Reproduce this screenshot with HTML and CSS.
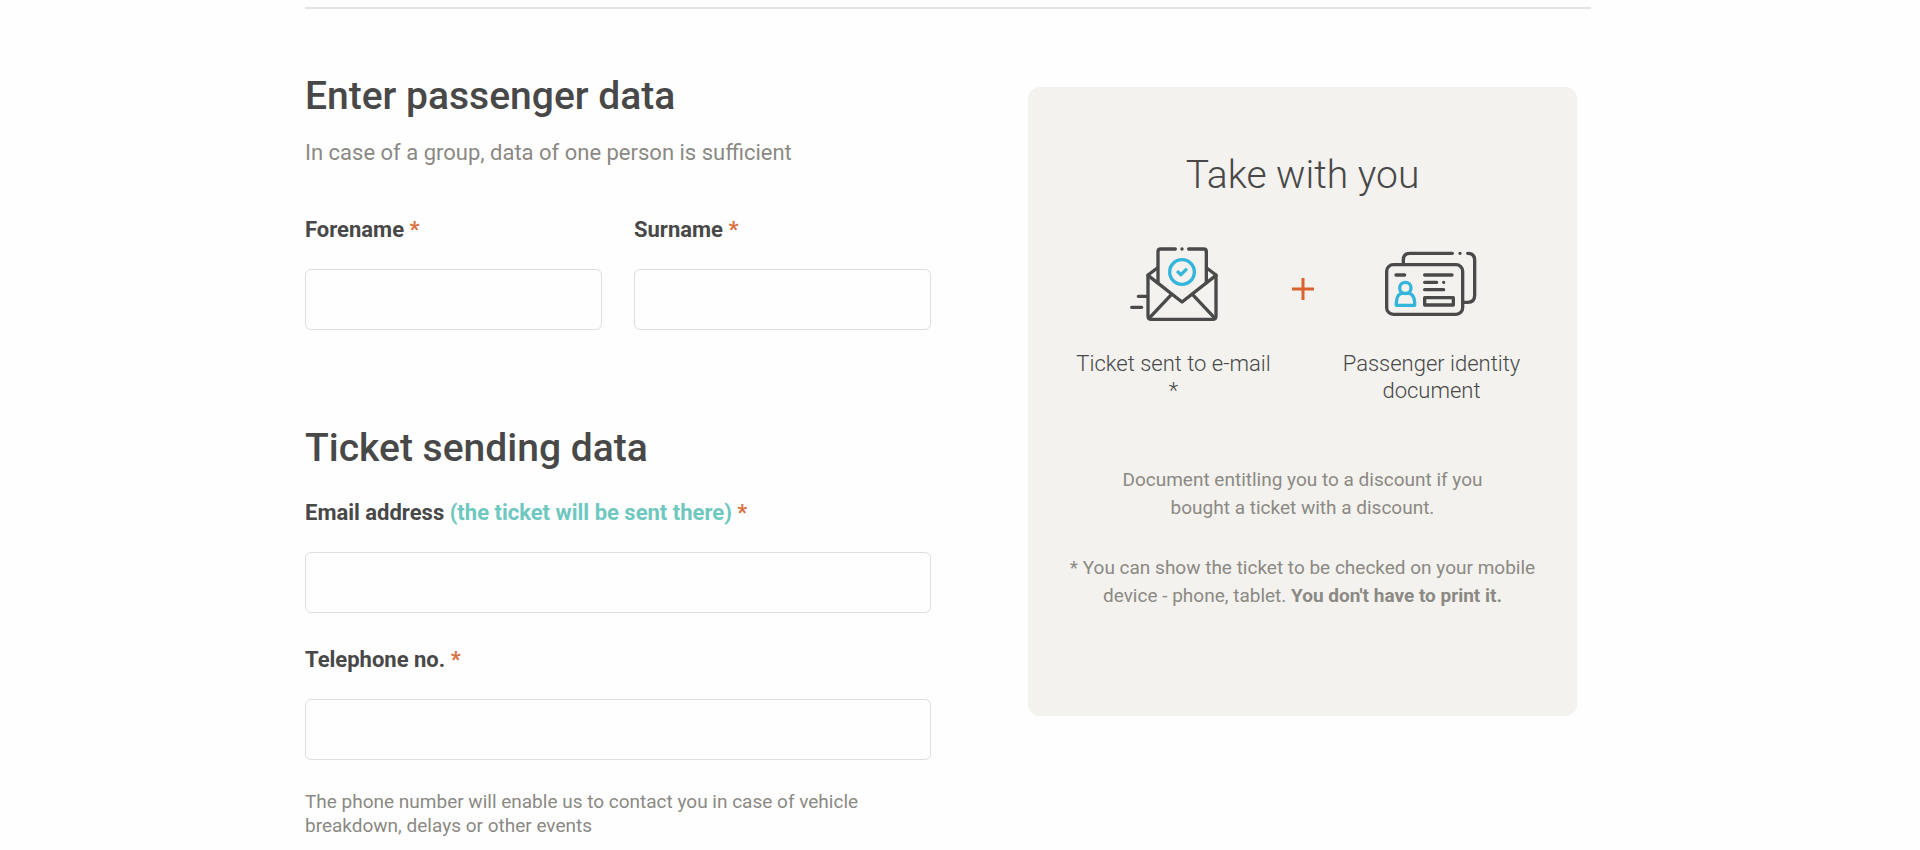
FILE: index.html
```html
<!DOCTYPE html>
<html lang="en">
<head>
  <meta charset="UTF-8" />
  <meta name="viewport" content="width=device-width, initial-scale=1.0"/>
  <title>Passenger data</title>
  <link rel="stylesheet" href="styles.css">
</head>
<body>

  <main class="container">

    <!-- Passenger form -->
    <form class="passenger-form">
      <section class="form-section">
        <h2>Enter passenger data</h2>
        <p class="subtitle">In case of a group, data of one person is sufficient</p>
        <div class="field-row">
          <div class="field">
            <label for="forename">Forename <span class="required">*</span></label>
            <input type="text" id="forename" name="forename" required>
          </div>
          <div class="field">
            <label for="surname">Surname <span class="required">*</span></label>
            <input type="text" id="surname" name="surname" required>
          </div>
        </div>
      </section>

      <section class="form-section">
        <h2>Ticket sending data</h2>
        <div class="field-list">
          <div class="field">
            <label for="email">Email address <span class="note">(the ticket will be sent there)</span> <span class="required">*</span></label>
            <input type="email" id="email" name="email" required>
          </div>
          <div class="field">
            <label for="phone">Telephone no. <span class="required">*</span></label>
            <input type="tel" id="phone" name="phone" aria-describedby="phone-hint" required>
          </div>
        </div>
        <p class="hint" id="phone-hint">The phone number will enable us to contact you in case of vehicle breakdown, delays or other events</p>
      </section>
    </form>

    <!-- Info card -->
    <aside class="card">
      <h2 class="card-title">Take with you</h2>

      <div class="items">
        <div class="item">
          <svg class="icon" viewBox="42 42 300 240" aria-hidden="true">
            <g class="dark">
              <path d="M144 158V65q0-8 8-8h44M236 57h45q8 0 8 8v93"/>
              <path d="M216 57h.1"/>
              <path d="M142 114L114 135V258q0 10 10 10H308q10 0 10-10V135L290 114"/>
              <path d="M114 136L216 216L318 136"/>
              <path d="M117 265L184 194M315 265L248 194"/>
              <path d="M85 199H112M65 232H95"/>
            </g>
            <g class="blue">
              <circle cx="216" cy="126" r="37"/>
              <path d="M204 126l9 8 15-15"/>
            </g>
          </svg>
          <p class="caption">Ticket sent to e-mail *</p>
        </div>

        <svg class="plus" viewBox="0 0 22 22" aria-hidden="true">
          <path d="M11 0V22M0 11H22"/>
        </svg>

        <div class="item">
          <svg class="icon" viewBox="336 42 300 240" aria-hidden="true">
            <g class="dark">
              <path d="M400 102V90q0-20 20-20H547M593 70q21 0 21 21V196q0 21-21 21H582"/>
              <path d="M570 70h.1M521 157h.1"/>
              <rect x="350" y="104" width="228" height="149" rx="20"/>
              <path d="M378 135H404M464 135H546M464 157H500M464 179H521"/>
              <rect x="464" y="203" width="86" height="22"/>
            </g>
            <g class="blue">
              <circle cx="406" cy="174" r="17"/>
              <path d="M379 226V217Q381 193 394 190H418Q432 193 434 217V226Z"/>
            </g>
          </svg>
          <p class="caption">Passenger identity document</p>
        </div>
      </div>

      <p class="card-text narrow">Document entitling you to a discount if you bought a ticket with a discount.</p>
      <p class="card-text">* You can show the ticket to be checked on your mobile device - phone, tablet. <strong>You don't have to print it.</strong></p>
    </aside>

  </main>

</body>
</html>
```

FILE: styles.css
```css
* {
  margin: 0;
  padding: 0;
  box-sizing: border-box;
}

body {
  font-family: Roboto, sans-serif;
  color: #484848;
  background-color: #fefefe;
  padding: 7px 24px 0 0;
}

/* Two columns: form and card */
.container {
  display: grid;
  grid-template-columns: 626fr 549fr;
  column-gap: 97px;
  align-items: start;
  max-width: 1286px;
  margin: 0 auto;
  padding: 63px 14px 40px 0;
  border-top: 2px solid #e4e4e4;
}

h2 {
  font-size: 39px;
  line-height: 48px;
  font-weight: 500;
}

/* Form */
.form-section + .form-section {
  margin-top: 94px;
}

.subtitle {
  margin-top: 19px;
  font-size: 22px;
  line-height: 28px;
  color: #8b8984;
}

.field-row {
  display: grid;
  grid-template-columns: 1fr 1fr;
  column-gap: 32px;
  margin-top: 49px;
}

.field-list {
  display: grid;
  row-gap: 33px;
  margin-top: 27px;
}

.field label {
  display: block;
  margin-bottom: 25px;
  font-size: 22px;
  line-height: 28px;
  font-weight: 700;
}

.field input {
  display: block;
  width: 100%;
  height: 61px;
  padding: 0 16px;
  font: inherit;
  font-size: 22px;
  color: inherit;
  background-color: #fefefe;
  border: 1px solid #dededb;
  border-radius: 6px;
}

.required {
  color: #d9703f;
}

.note {
  color: #6fc8bf;
}

.hint {
  max-width: 580px;
  margin-top: 30px;
  font-size: 19px;
  line-height: 24px;
  color: #8b8984;
}

/* Card */
.card {
  margin-top: 15px;
  padding: 64px 36px 106px;
  text-align: center;
  background-color: #f3f2ee;
  border-radius: 12px;
}

.card-title {
  font-weight: 300;
}

.items {
  display: flex;
  justify-content: center;
  align-items: flex-start;
  gap: 18px;
  margin: 45px 0 62px;
}

.item {
  width: 200px;
}

.icon {
  display: block;
  width: 100px;
  height: 80px;
  margin: 0 auto 26px;
  fill: none;
  stroke-width: 10;
  stroke-linecap: round;
  stroke-linejoin: round;
}

.icon .dark {
  stroke: #4a4a4a;
}

.icon .blue {
  stroke: #33b5dc;
}

.plus {
  width: 22px;
  height: 22px;
  margin-top: 34px;
  fill: none;
  stroke: #d9622f;
  stroke-width: 3;
}

.caption {
  font-size: 22px;
  line-height: 27px;
  font-weight: 300;
}

.card-text {
  font-size: 19px;
  line-height: 28px;
  color: #8b8984;
}

.card-text.narrow {
  max-width: 380px;
  margin: 0 auto 32px;
}

/* Small screens */
@media (max-width: 1100px) {
  body {
    padding: 7px 20px 0;
  }

  .container {
    grid-template-columns: 1fr;
    row-gap: 40px;
    padding-right: 0;
  }
}
```
